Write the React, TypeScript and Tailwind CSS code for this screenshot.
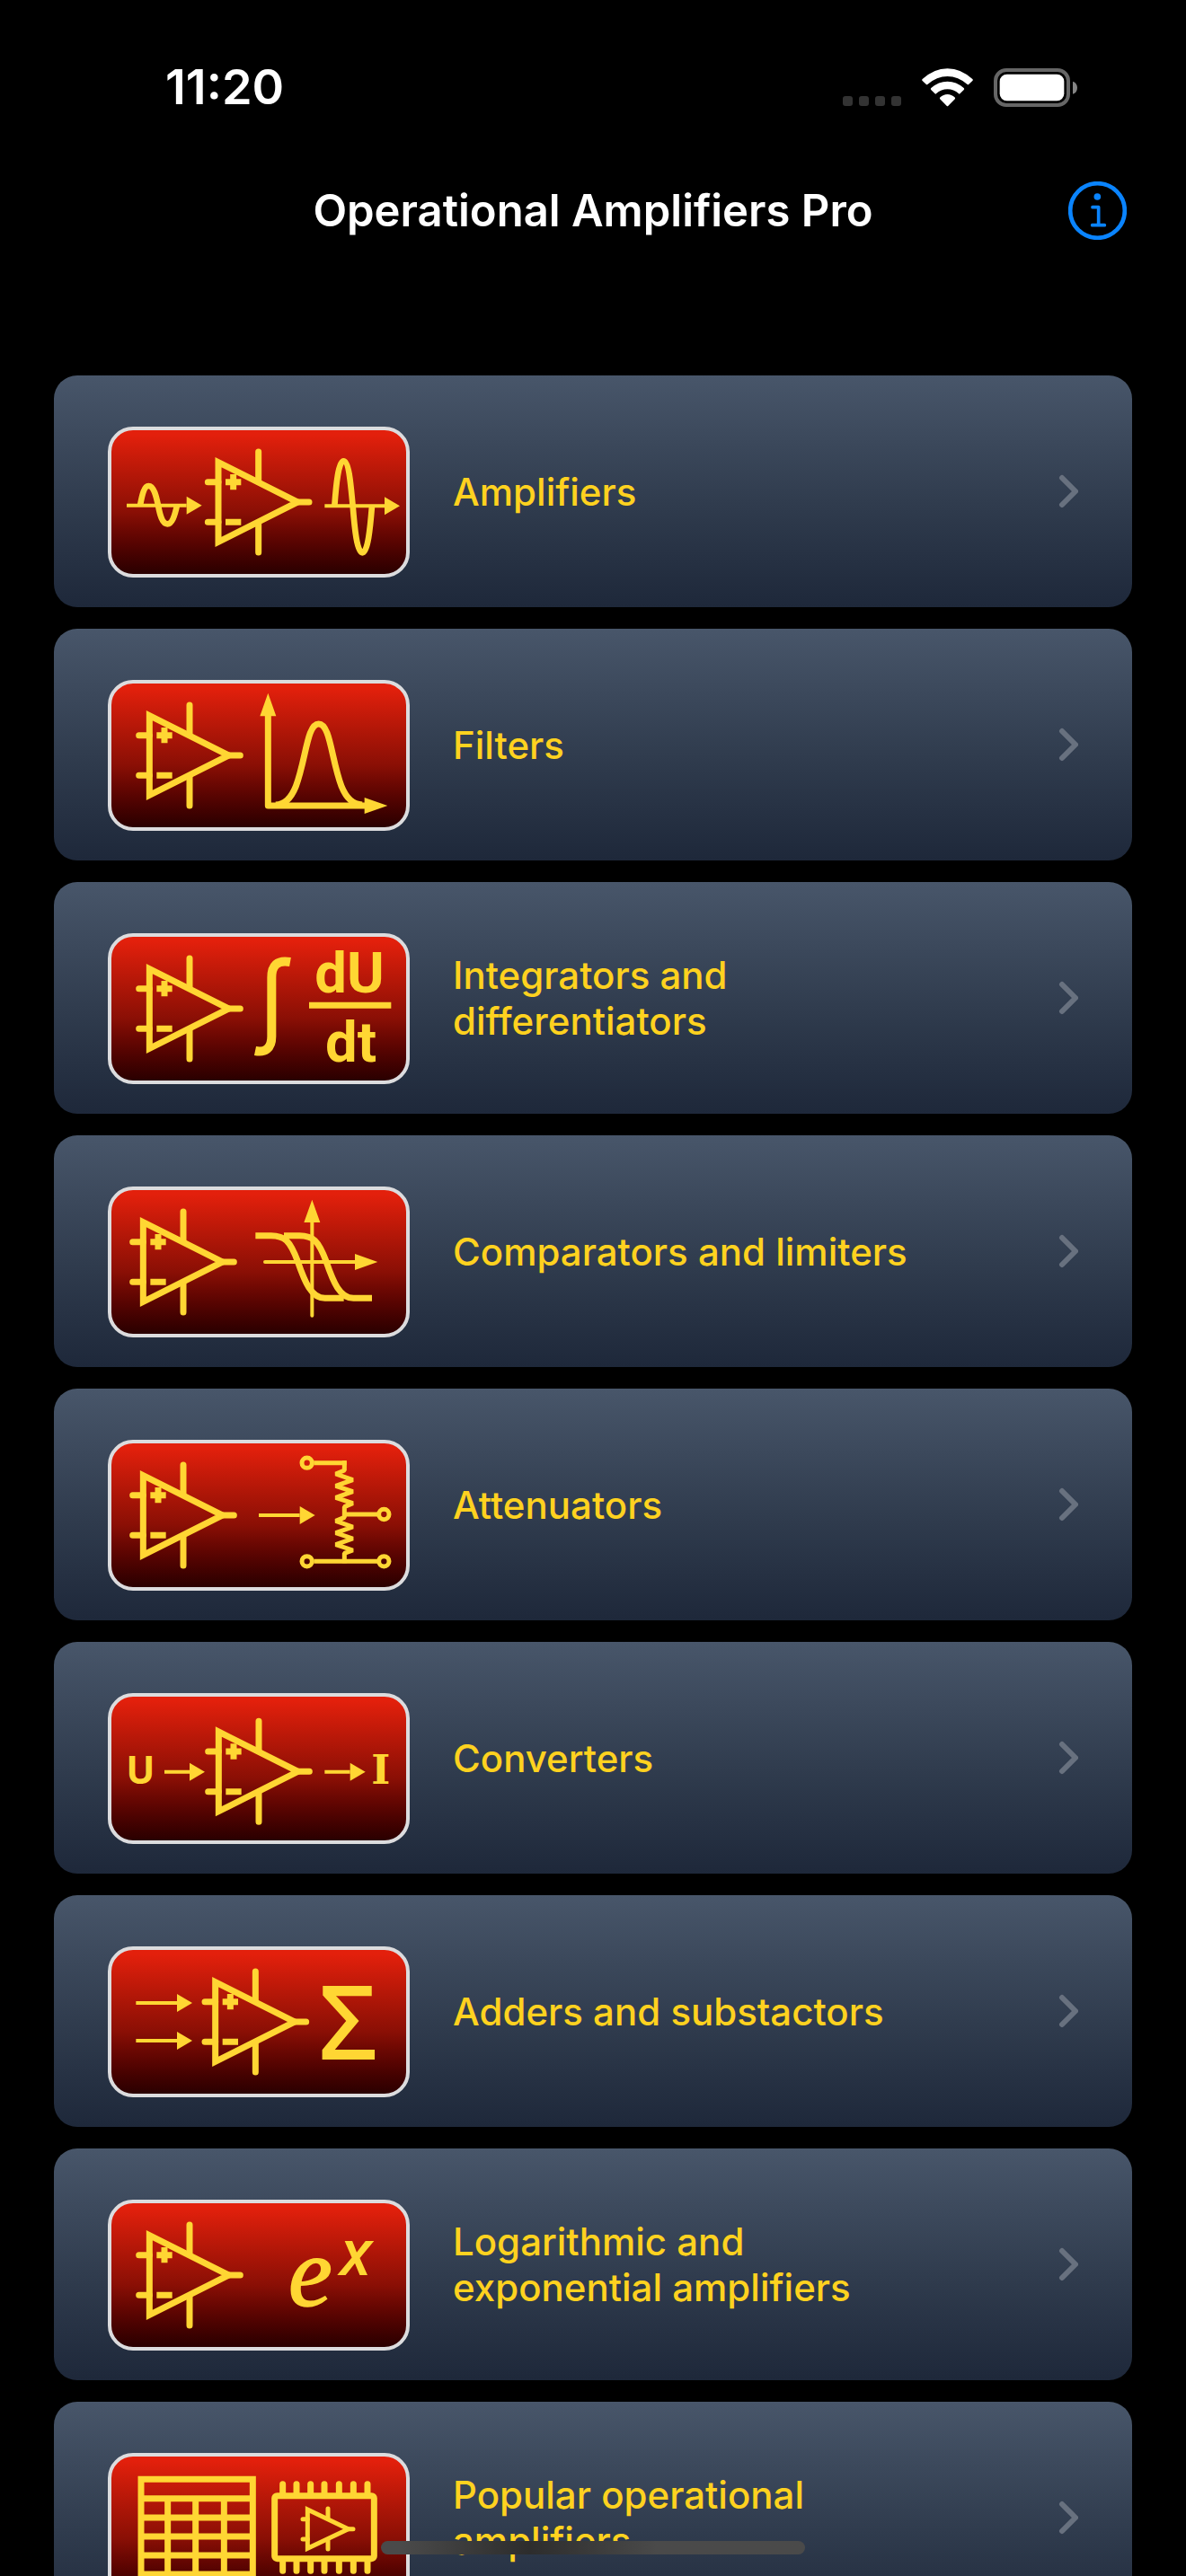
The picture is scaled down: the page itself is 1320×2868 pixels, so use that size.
import { useId } from "react";
import type { ReactNode } from "react";

const YELLOW = "#ffd633";

function Badge({ children }: { children: ReactNode }) {
  return (
    <span className="block h-[168px] w-[336px] shrink-0 overflow-hidden rounded-[28px] border-4 border-[#dcdcde] bg-linear-to-b from-[#e3200c] from-3% via-[#8a0f05] via-57% to-[#2a0000]">
      <svg
        viewBox="12 12 984 480"
        className="block h-full w-full"
        fill="none"
        stroke={YELLOW}
        strokeWidth={21}
        aria-hidden="true"
      >
        {children}
      </svg>
    </span>
  );
}

function OpAmp({ x = 0, y = 0 }: { x?: number; y?: number }) {
  return (
    <g transform={`translate(${x} ${y})`}>
      <path d="M139 119V385L404 252Z" strokeMiterlimit={10} />
      <path
        d="M273 84V184M273 320V420M404 252H442M104 185H139M104 319H139"
        strokeLinecap="round"
      />
      <path d="M163 185H215M189 159V211M163 319H215" />
    </g>
  );
}

function Arrow({ from, base, y }: { from: number; base: number; y: number }) {
  return (
    <>
      <path d={`M${from} ${y}H${base}`} strokeWidth={12} />
      <path
        d={`M${base} ${y - 30}L${base + 51} ${y}L${base} ${y + 30}Z`}
        fill={YELLOW}
        stroke="none"
      />
    </>
  );
}

function Glyph({
  x,
  y,
  size,
  family,
  weight = 700,
  italic = false,
  outline = 0,
  children,
}: {
  x: number;
  y: number;
  size: number;
  family: string;
  weight?: number;
  italic?: boolean;
  outline?: number;
  children: string;
}) {
  return (
    <text
      x={x}
      y={y}
      fontSize={size}
      fontFamily={family}
      fontWeight={weight}
      fontStyle={italic ? "italic" : "normal"}
      textAnchor="middle"
      fill={YELLOW}
      strokeWidth={outline}
    >
      {children}
    </text>
  );
}

const AmplifiersArt = () => (
  <>
    <Arrow from={63} base={263} y={263} />
    <path
      d="M108 263C115 225 122 198 136 198C154 198 162 235 168 263C174 295 182 325 199 325C214 325 223 300 231 263"
      strokeWidth={20}
    />
    <OpAmp x={230} />
    <Arrow from={724} base={924} y={265} />
    <path
      d="M757 265C762 195 770 115 787 115C806 115 812 205 818 265C824 340 832 421 850 421C868 421 876 340 882 265"
      strokeWidth={20}
    />
  </>
);

const FiltersArt = () => (
  <>
    <OpAmp />
    <path d="M535 115V420H862" strokeLinejoin="round" />
    <path d="M508 121L535 44L562 121ZM857 393L934 420L857 447Z" fill={YELLOW} stroke="none" />
    <path d="M560 417C590 417 612 395 628 355C662 265 665 147 704 147C743 147 746 265 780 355C796 395 818 417 850 417" />
  </>
);

const IntegratorsArt = () => (
  <>
    <OpAmp />
    <path d="M609 96C565 88 547 108 547 148V345C547 385 525 400 492 393" strokeWidth={30} />
    <path d="M672 241H946" />
    <Glyph x={807} y={199} size={190} family="Roboto, sans-serif">
      dU
    </Glyph>
    <Glyph x={812} y={430} size={190} family="Roboto, sans-serif">
      dt
    </Glyph>
  </>
);

const ComparatorsArt = () => (
  <>
    <OpAmp x={-21} />
    <path d="M525 252H830M682 115V431" strokeWidth={12} strokeLinecap="round" />
    <path d="M655 120L682 44L709 120ZM825 225L901 252L825 279Z" fill={YELLOW} stroke="none" />
    <path d="M493 164H545C590 164 608 180 634 250C658 320 680 373 725 373H788" />
    <path d="M588 164H640C685 164 703 180 729 250C753 320 775 373 820 373H882" />
  </>
);

const AttenuatorsArt = () => (
  <>
    <OpAmp x={-21} />
    <Arrow from={504} base={641} y={252} />
    <g strokeWidth={15}>
      <circle cx={665} cy={77} r={17} />
      <circle cx={922} cy={249} r={17} />
      <circle cx={665} cy={406} r={17} />
      <circle cx={922} cy={406} r={17} />
      <path d="M688 77H797M790 249H900M688 406H900" />
      <path
        d="M790 70V102L761 114L818 134L761 154L818 173L761 193L818 212L790 224V251L790 259L761 271L818 291L761 311L818 330L761 350L818 369L790 379V412"
        strokeLinejoin="bevel"
      />
    </g>
  </>
);

const ConvertersArt = () => (
  <>
    <Glyph x={109} y={304} size={128} family="'Open Sans', sans-serif">
      U
    </Glyph>
    <Arrow from={189} base={273} y={263} />
    <OpAmp x={231} y={10} />
    <Arrow from={724} base={809} y={263} />
    <Glyph x={911} y={304} size={135} family="'DejaVu Serif', serif">
      I
    </Glyph>
  </>
);

const AddersArt = () => (
  <>
    <Arrow from={94} base={231} y={189} />
    <Arrow from={94} base={231} y={315} />
    <OpAmp x={220} />
    <Glyph x={802} y={379} size={340} family="'Open Sans', sans-serif" weight={600}>
      Σ
    </Glyph>
  </>
);

const LogarithmicArt = () => (
  <>
    <OpAmp />
    <Glyph
      x={676}
      y={355}
      size={330}
      family="'Liberation Serif', serif"
      weight={400}
      outline={5}
      italic
    >
      e
    </Glyph>
    <Glyph x={828} y={251} size={210} family="'Open Sans', sans-serif" weight={600} italic>
      x
    </Glyph>
  </>
);

const PopularArt = () => (
  <>
    <path d="M111 88H484V405H111ZM111 152H484M111 216H484M111 279H484M111 342H484" />
    <path d="M200 152V405M293 152V405M388 152V405" />
    <rect x={557} y={143} width={332} height={210} rx={8} />
    <path
      d="M584 104V140M630 104V140M677 104V140M723 104V140M772 104V140M820 104V140M867 104V140M584 356V394M630 356V394M677 356V394M723 356V394M772 356V394M820 356V394M867 356V394"
      strokeLinecap="round"
    />
    <g strokeWidth={15}>
      <path d="M667 189V319L803 254Z" />
      <path
        d="M735 186V215M735 293V321M803 254H819M651 221H667M651 288H667"
        strokeLinecap="round"
      />
    </g>
  </>
);

const topics = [
  { title: "Amplifiers", Art: AmplifiersArt },
  { title: "Filters", Art: FiltersArt },
  { title: "Integrators and differentiators", Art: IntegratorsArt },
  { title: "Comparators and limiters", Art: ComparatorsArt },
  { title: "Attenuators", Art: AttenuatorsArt },
  { title: "Converters", Art: ConvertersArt },
  { title: "Adders and substactors", Art: AddersArt },
  { title: "Logarithmic and exponential amplifiers", Art: LogarithmicArt },
  { title: "Popular operational amplifiers", Art: PopularArt },
];

function TopicRow({ title, Art }: { title: string; Art: () => ReactNode }) {
  const id = useId();
  return (
    <li>
      <button
        type="button"
        aria-labelledby={id}
        className="flex h-[258px] w-full items-center rounded-[26px] bg-linear-to-b from-[#48566a] via-[#303c4e] via-55% to-[#1e283a] px-[60px] text-left"
      >
        <span className="pt-6">
          <Badge>
            <Art />
          </Badge>
        </span>
        <span
          id={id}
          className="ml-12 w-[510px] text-[42px] leading-[51px] font-medium text-[#ffd21f]"
        >
          {title}
        </span>
        <svg
          viewBox="0 0 22 38"
          className="ml-auto h-[38px] w-[22px]"
          fill="none"
          stroke="#68717f"
          strokeWidth={6}
          strokeLinecap="round"
          strokeLinejoin="round"
          aria-hidden="true"
        >
          <path d="M4 4L19 19L4 34" />
        </svg>
      </button>
    </li>
  );
}

function StatusBar() {
  return (
    <div className="flex h-[194px] shrink-0 items-center justify-between pr-[121px] pl-[184px]">
      <time className="text-[54px] leading-none font-semibold">11:20</time>
      <div className="flex items-end gap-[23px]">
        <svg viewBox="0 0 65 12" className="h-3 w-[65px]" fill="#333333" aria-hidden="true">
          <rect x="0" width="11" height="11" rx="3" />
          <rect x="18" width="11" height="11" rx="3" />
          <rect x="36" width="11" height="11" rx="3" />
          <rect x="54" width="11" height="11" rx="3" />
        </svg>
        <svg viewBox="0 0 172 129" className="h-[43px] w-[57px]" fill="#ffffff" aria-hidden="true">
          <path d="M2 36Q40 0 86 0T170 36Q173 39 170 42L157 54Q155 56 153 54Q122 27 86 27T19 54Q17 56 15 54L2 42Q-1 39 2 36Z" />
          <path d="M31 66Q56 44 86 44T141 66Q144 69 141 72L128 85Q126 87 124 85Q107 70 86 70T48 85Q46 87 44 85L31 72Q28 69 31 66Z" />
          <path d="M61 98Q72 87 86 87T111 98Q113 101 111 103L88 126Q86 128 84 126L61 103Q59 101 61 98Z" />
        </svg>
        <svg viewBox="0 0 279 129" className="h-[43px] w-[93px]" aria-hidden="true">
          <rect x="6" y="6" width="243" height="117" rx="36" fill="none" stroke="#666666" strokeWidth="12" />
          <rect x="20" y="20" width="215" height="89" rx="24" fill="#ffffff" />
          <path d="M264 44C274 47 279 55 279 65C279 75 274 83 264 86Z" fill="#858585" />
        </svg>
      </div>
    </div>
  );
}

export default function App() {
  return (
    <div className="relative flex h-screen flex-col overflow-hidden bg-black font-['Inter',sans-serif] text-white">
      <StatusBar />
      <header className="grid h-20 shrink-0 grid-cols-[1fr_auto_1fr] items-center px-[66px]">
        <h1 className="col-start-2 text-[49px] leading-none font-semibold">
          Operational Amplifiers Pro
        </h1>
        <button type="button" aria-label="Information" className="justify-self-end">
          <svg
            viewBox="0 0 195 195"
            className="block h-[65px] w-[65px]"
            fill="none"
            stroke="#0a84ff"
            strokeLinecap="round"
            strokeLinejoin="round"
            aria-hidden="true"
          >
            <circle cx="97.5" cy="97.5" r="91" strokeWidth="14" />
            <circle cx="97" cy="51" r="11.5" fill="#0a84ff" stroke="none" />
            <path d="M81 86H101V146M80 146H121" strokeWidth="11" />
          </svg>
        </button>
      </header>
      <main className="min-h-0 flex-1 overflow-hidden px-[60px] pt-36">
        <ul className="flex flex-col gap-6">
          {topics.map((topic) => (
            <TopicRow key={topic.title} title={topic.title} Art={topic.Art} />
          ))}
        </ul>
      </main>
      <div className="absolute bottom-6 left-1/2 h-[15px] w-[472px] -translate-x-1/2 rounded-full bg-linear-to-r from-[#4a4a4a] from-5% via-[#2d2d2d] via-35% to-[#4a4a4a] to-65%" />
    </div>
  );
}
